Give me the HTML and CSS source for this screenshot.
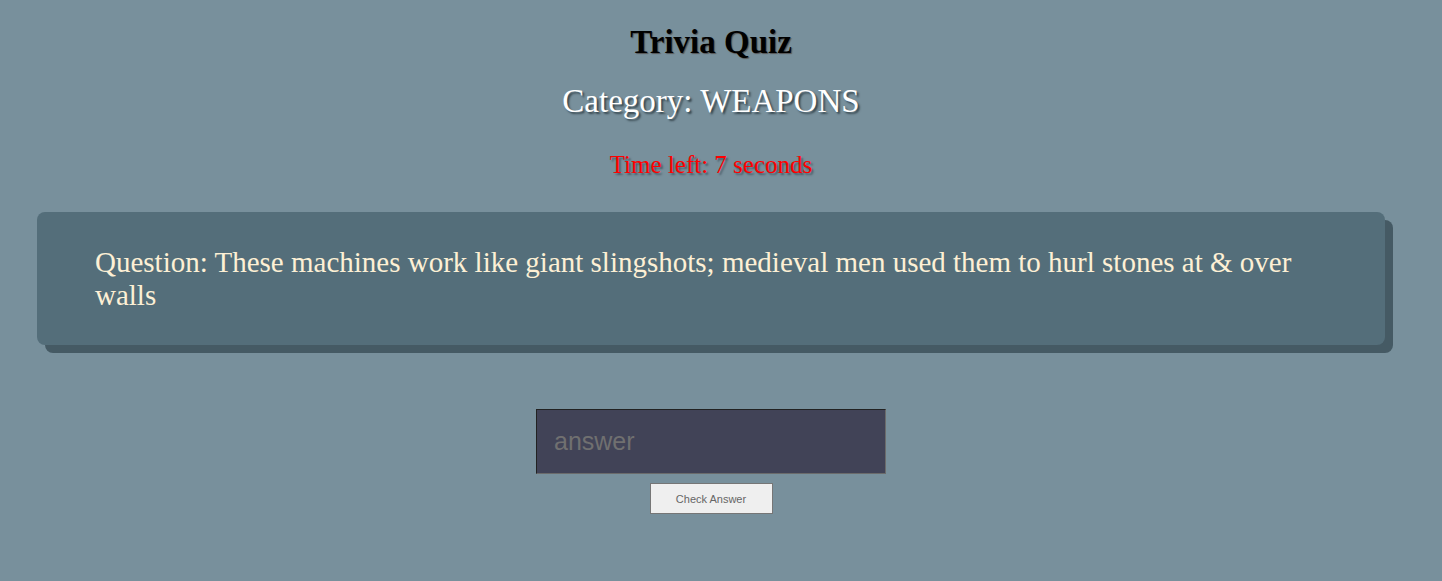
FILE: index.html
```html
<!DOCTYPE html>
<html>
<head>
<meta charset="utf-8">
<link rel="stylesheet" href="styles.css">
</head>
<body>
<h1 class="title">Trivia Quiz</h1>
<h2 class="category">Category: WEAPONS</h2>
<p class="timer">Time left: 7 seconds</p>
<div class="card">
  <p class="question">Question: These machines work like giant slingshots; medieval men used them to hurl stones at &amp; over walls</p>
</div>
<div class="answer-area">
  <input class="answer" type="text" placeholder="answer">
  <button class="check">Check Answer</button>
</div>
</body>
</html>
```
FILE: styles.css
```css
html, body {
  background: #78909c;
}
body {
  margin: 0 20px 0 0;
  padding: 24px 0 0;
  font-family: "Liberation Serif", "Times New Roman", serif;
}
.title {
  margin: 0;
  text-align: center;
  font-size: 33px;
  font-weight: bold;
  color: #000;
  text-shadow: 1px 1px 1px #555;
  line-height: 37px;
}
.category {
  margin: 22px 0 0;
  text-align: center;
  font-size: 33px;
  font-weight: normal;
  color: #fff;
  text-shadow: 2px 2px 2px #37474f;
  line-height: 37px;
}
.timer {
  margin: 31px 0 0;
  text-align: center;
  font-size: 25px;
  color: #ff0000;
  text-shadow: 2px 2px 2px #4a5a66;
  line-height: 28px;
}
.card {
  margin: 33px 37px 0 37px;
  background: #546e7a;
  border-radius: 8px;
  box-shadow: 8px 8px 0 #455a64;
  padding: 34px 58px 33px;
}
.question {
  margin: 0;
  font-size: 29px;
  line-height: 33px;
  color: #fdf0d5;
}
.answer-area {
  display: flex;
  flex-direction: column;
  align-items: center;
  margin-top: 64px;
}
.answer {
  box-sizing: border-box;
  width: 350px;
  height: 65px;
  margin: 0;
  padding: 0 17px;
  background: #414357;
  border: 1px solid #6b6b6b;
  border-top-color: #222;
  border-left-color: #222;
  font-family: "Liberation Sans", Arial, sans-serif;
  font-size: 25px;
  color: #ddd;
  outline: none;
}
.answer::placeholder {
  color: #707070;
}
.check {
  box-sizing: border-box;
  margin-top: 9px;
  width: 123px;
  height: 31px;
  background: #efefef;
  border: 1px solid #767676;
  border-radius: 0;
  font-family: "Liberation Sans", Arial, sans-serif;
  font-size: 11px;
  color: #666;
  padding: 0;
}
```
